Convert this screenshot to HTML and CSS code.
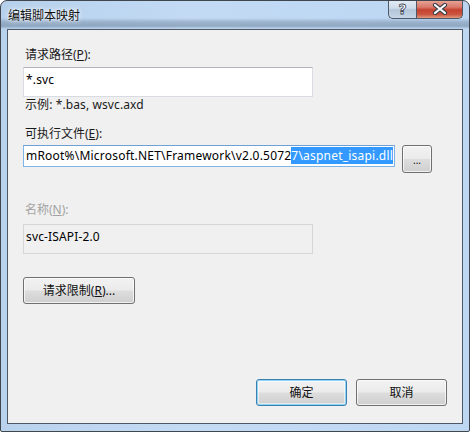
FILE: index.html
```html
<!DOCTYPE html>
<html lang="zh-CN">
<head>
<meta charset="utf-8">
<title>编辑脚本映射</title>
<link rel="stylesheet" href="styles.css">
</head>
<body>
<div class="window">
  <div class="titlebar">
    <div class="title">编辑脚本映射</div>
    <div class="caption-buttons">
      <div class="cap-btn help"><span class="q">?</span></div>
      <div class="cap-btn close">
        <svg width="16" height="12" viewBox="0 0 16 12">
          <path d="M3 2 L13 10 M13 2 L3 10" stroke="#3b3f4a" stroke-width="4.2" stroke-linecap="round"/>
          <path d="M3 2 L13 10 M13 2 L3 10" stroke="#ffffff" stroke-width="2.2" stroke-linecap="round"/>
        </svg>
      </div>
    </div>
  </div>
  <div class="client">
    <div class="label l1">请求路径(<u>P</u>):</div>
    <div class="textbox tall">*.svc</div>
    <div class="hint">示例: *.bas, wsvc.axd</div>
    <div class="label l2">可执行文件(<u>E</u>):</div>
    <div class="row">
      <div class="textbox path"><span>mRoot%\Microsoft.NET\Framework\v2.0.5072</span><span class="sel">7\aspnet_isapi.dll</span></div>
      <div class="button browse">...</div>
    </div>
    <div class="label l3 disabled">名称(<u>N</u>):</div>
    <div class="textbox tall readonly">svc-ISAPI-2.0</div>
    <div class="button limits">请求限制(<u>R</u>)...</div>
    <div class="footer">
      <div class="button default">确定</div>
      <div class="button">取消</div>
    </div>
  </div>
</div>
</body>
</html>
```

FILE: styles.css
```css
html, body {
  margin: 0;
  padding: 0;
  background: #ffffff;
}

body {
  font-family: "Noto Sans", "Noto Sans CJK SC", sans-serif;
  font-size: 12px;
  color: #000;
}

.window {
  width: 470px;
  height: 432px;
  box-sizing: border-box;
  border: 1px solid #3f4650;
  border-radius: 7px 7px 2px 2px;
  background:
    linear-gradient(to bottom, rgba(255,255,255,0) 0px, rgba(255,255,255,0) 17px, rgba(90,110,135,0.35) 21px, rgba(90,110,135,0.45) 25px, rgba(200,220,240,0.2) 28px),
    linear-gradient(to right, #b6d0ec 0%, #c2daf4 40%, #bcd6f2 100%);
  display: flex;
  flex-direction: column;
  overflow: hidden;
}

.titlebar {
  height: 28px;
  display: flex;
  align-items: flex-start;
  justify-content: space-between;
  flex: none;
}

.title {
  padding: 6px 0 0 7px;
  line-height: 16px;
  font-family: "Noto Sans CJK SC", sans-serif;
  font-size: 12px;
  color: #111;
  text-shadow: 0 0 6px #fff, 0 0 3px #fff;
}

.caption-buttons {
  display: flex;
  margin: -1px 6px 0 0;
}

.cap-btn {
  height: 19px;
  box-sizing: border-box;
  border: 1px solid #4f5866;
  border-top: none;
  display: flex;
  align-items: center;
  justify-content: center;
}

.help {
  width: 28px;
  border-right: none;
  border-radius: 0 0 0 5px;
  background: linear-gradient(to bottom, #e4edf7 0%, #cfdcea 45%, #b4c5d9 55%, #c6d6e8 100%);
}

.help .q {
  font-family: "DejaVu Sans", sans-serif;
  font-weight: bold;
  font-size: 14px;
  line-height: 14px;
  color: #fff;
  -webkit-text-stroke: 0.8px #3d4654;
}

.close {
  width: 47px;
  border-radius: 0 0 5px 0;
  background: linear-gradient(to bottom, #e9a99a 0%, #d9786a 40%, #c5412f 55%, #cb5540 80%, #de9a7e 100%);
}

.client {
  flex: 1;
  margin: 0 6px 7px 6px;
  border: 1px solid #4d5868;
  background: #f0f0f0;
  display: flex;
  flex-direction: column;
  padding: 17px 15px 17px 15px;
  box-sizing: border-box;
}

.label {
  line-height: 16px;
  padding-left: 2px;
  color: #1a1a1a;
}

.label u {
  text-decoration: underline;
  text-underline-offset: 1px;
}

.l1 { margin-bottom: 4px; }
.l2 { margin-top: 13px; margin-bottom: 3px; }
.l3 { margin-top: 29px; margin-bottom: 6px; }

.disabled { color: #a3a3a3; }

.hint {
  line-height: 16px;
  padding-left: 2px;
  color: #1a1a1a;
  letter-spacing: 0.1px;
}

.textbox {
  box-sizing: border-box;
  background: #fff;
  border: 1px solid #d8dce2;
  border-top-color: #b0b4ba;
  padding: 4px 2px 0 2px;
  line-height: 16px;
  white-space: nowrap;
  overflow: hidden;
  letter-spacing: 0.15px;
}

.tall {
  width: 290px;
  height: 30px;
}

.readonly {
  background: #f0f0f0;
  border-color: #d6d6d6;
}

.row {
  display: flex;
  align-items: flex-start;
  gap: 7px;
  height: 28px;
}

.path {
  width: 372px;
  height: 22px;
  padding: 2px 2px 0 2px;
  border-color: #7eb4ea;
  border-top-color: #6ca0d6;
  letter-spacing: 0.21px;
}

.sel {
  background: #3399ff;
  color: #fff;
}

.button {
  box-sizing: border-box;
  border: 1px solid #707070;
  border-radius: 3px;
  background: linear-gradient(to bottom, #f2f2f2 0%, #ebebeb 48%, #dddddd 52%, #cfcfcf 100%);
  box-shadow: inset 0 0 0 1px rgba(255,255,255,0.7);
  display: flex;
  align-items: center;
  justify-content: center;
  line-height: 16px;
  color: #111;
}

.browse {
  width: 30px;
  height: 28px;
  font-size: 10px;
  padding-top: 2px;
}

.limits {
  width: 112px;
  height: 27px;
  margin-top: 23px;
}

.footer {
  margin-top: auto;
  display: flex;
  justify-content: flex-end;
  gap: 9px;
}

.footer .button {
  width: 91px;
  height: 27px;
}

.button.default {
  border-color: #3c7fb1;
  box-shadow: inset 0 0 0 1px #8fd4f2, inset 0 0 0 2px rgba(255,255,255,0.5);
}
```
